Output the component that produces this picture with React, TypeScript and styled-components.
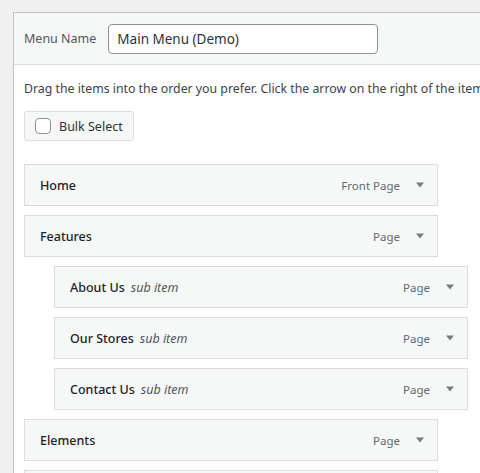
import React from "react";
import styled, { createGlobalStyle } from "styled-components";

const Global = createGlobalStyle`
  html, body { margin: 0; padding: 0; }
  body {
    background: #f0f0f1;
    overflow: hidden;
    font-family: "Noto Sans", "Open Sans", sans-serif;
    color: #3c434a;
    font-size: 12.5px;
  }
`;

const Page = styled.div`
  padding: 12px 0 0 13px;
  width: 480px;
  height: 473px;
  box-sizing: border-box;
  overflow: hidden;
`;

const Panel = styled.div`
  width: 520px;
  border: 1px solid #c3c4c7;
  border-right: none;
  background: #fff;
`;

const Header = styled.div`
  display: flex;
  align-items: center;
  gap: 12px;
  padding: 11px 10px 10px;
  background: #f6f7f7;
  border-bottom: 1px solid #dcdcde;
`;

const Label = styled.label`
  color: #50575e;
  font-size: 12.5px;
  line-height: 30px;
`;

const NameInput = styled.input`
  box-sizing: border-box;
  width: 270px;
  height: 30px;
  padding: 0 8px;
  border: 1px solid #8c8f94;
  border-radius: 4px;
  background: #fff;
  color: #2c3338;
  font-family: inherit;
  font-size: 13.5px;
  outline: none;
`;

const Body = styled.div`
  padding: 14px 10px 20px;
`;

const Instructions = styled.p`
  margin: 0;
  white-space: nowrap;
  line-height: 20px;
  font-size: 12.3px;
  color: #3c434a;
`;

const BulkButton = styled.button`
  display: inline-flex;
  align-items: center;
  gap: 8px;
  box-sizing: border-box;
  height: 30px;
  margin-top: 12px;
  padding: 0 10px;
  border: 1px solid #dcdcde;
  border-radius: 3px;
  background: #f6f7f7;
  color: #2c3338;
  font-family: inherit;
  font-size: 12.5px;
  cursor: pointer;
`;

const Check = styled.span`
  box-sizing: border-box;
  width: 16px;
  height: 16px;
  border: 1px solid #8c8f94;
  border-radius: 4px;
  background: #fff;
`;

const List = styled.ul`
  list-style: none;
  margin: 23px 0 0;
  padding: 0;
  display: flex;
  flex-direction: column;
  gap: 9px;
`;

const Item = styled.li<{ $depth: number }>`
  box-sizing: border-box;
  display: flex;
  align-items: center;
  width: 414px;
  height: 42px;
  margin-left: ${(p) => p.$depth * 30}px;
  padding: 0 13px 0 15px;
  border: 1px solid #dcdcde;
  background: #f6f7f7;
`;

const Title = styled.span`
  flex: 1;
  font-weight: 500;
  color: #1d2327;
  font-size: 12.5px;
`;

const Sub = styled.span`
  margin-left: 6px;
  font-style: italic;
  font-weight: 400;
  color: #50575e;
`;

const Type = styled.span`
  color: #646970;
  font-size: 11.5px;
  margin-right: 16px;
`;

const Arrow = () => (
  <svg width="8" height="6" viewBox="0 0 8 6" aria-hidden>
    <path d="M0 0.5 H8 L4 5.5 Z" fill="#787c82" />
  </svg>
);

const items = [
  { title: "Home", type: "Front Page", depth: 0 },
  { title: "Features", type: "Page", depth: 0 },
  { title: "About Us", type: "Page", depth: 1 },
  { title: "Our Stores", type: "Page", depth: 1 },
  { title: "Contact Us", type: "Page", depth: 1 },
  { title: "Elements", type: "Page", depth: 0 },
  { title: "Blog", type: "Page", depth: 0 },
];

export default function App() {
  return (
    <>
      <Global />
      <Page>
        <Panel>
          <Header>
            <Label>Menu Name</Label>
            <NameInput defaultValue="Main Menu (Demo)" />
          </Header>
          <Body>
            <Instructions>
              Drag the items into the order you prefer. Click the arrow on the right of the item to reveal additional configuration options.
            </Instructions>
            <BulkButton>
              <Check />
              Bulk Select
            </BulkButton>
            <List>
              {items.map((it) => (
                <Item key={it.title} $depth={it.depth}>
                  <Title>
                    {it.title}
                    {it.depth > 0 && <Sub>sub item</Sub>}
                  </Title>
                  <Type>{it.type}</Type>
                  <Arrow />
                </Item>
              ))}
            </List>
          </Body>
        </Panel>
      </Page>
    </>
  );
}
